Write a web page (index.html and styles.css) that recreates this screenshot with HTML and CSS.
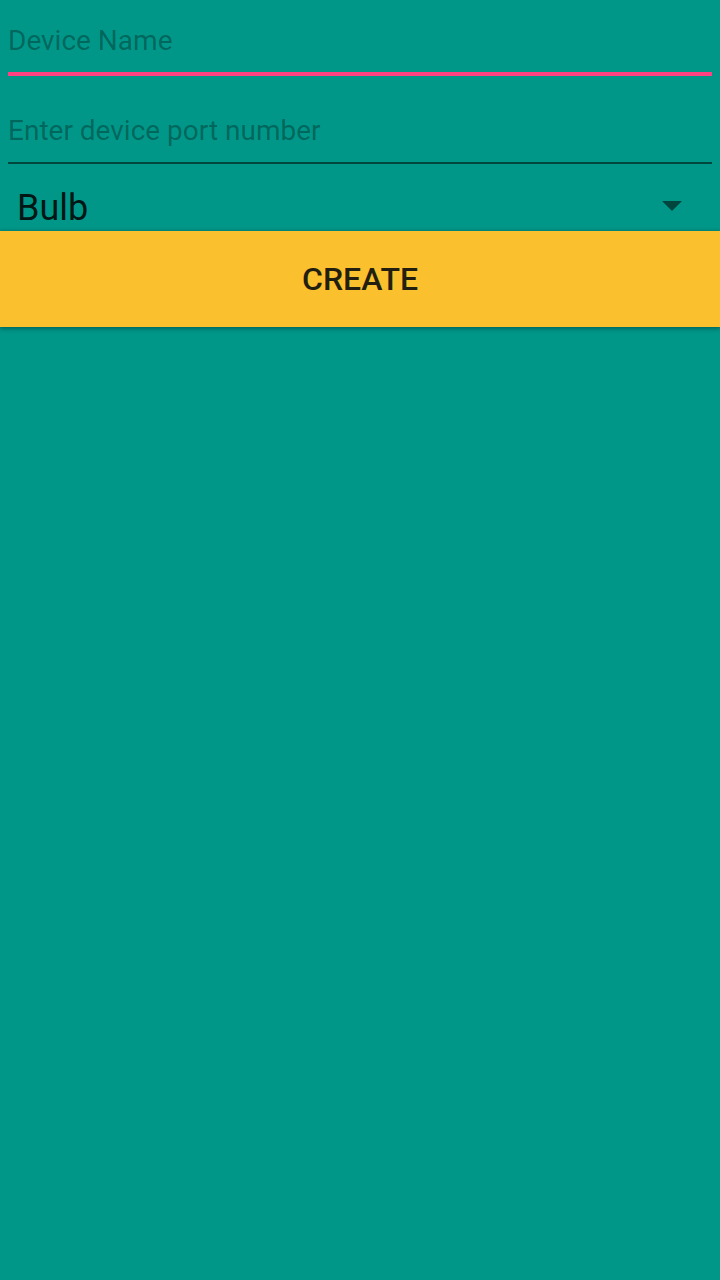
FILE: index.html
```html
<!DOCTYPE html>
<html>
<head>
<meta charset="utf-8">
<link rel="stylesheet" href="styles.css">
</head>
<body>
<div class="screen">
  <div class="field field-focused">
    <div class="hint">Device Name</div>
  </div>
  <div class="field field-port">
    <div class="hint">Enter device port number</div>
  </div>
  <div class="spinner">
    <span class="spinner-text">Bulb</span>
    <svg class="caret" width="20" height="10" viewBox="0 0 20 10"><polygon points="0,0 20,0 10,10" fill="#00463d"/></svg>
  </div>
  <div class="button">CREATE</div>
</div>
</body>
</html>
```
FILE: styles.css
```css
html, body {
  margin: 0;
  padding: 0;
  background: #009688;
}
.screen {
  width: 720px;
  height: 1280px;
  background: #009688;
  font-family: Roboto, "Noto Sans", sans-serif;
  display: flex;
  flex-direction: column;
}
.field {
  margin: 0 8px;
}
.hint {
  font-size: 28px;
  line-height: 32px;
  color: rgba(0, 0, 0, 0.32);
}
.field-focused {
  padding-top: 25px;
}
.field-focused .hint {
  padding-bottom: 15px;
  border-bottom: 4px solid #ff4081;
}
.field-port {
  padding-top: 39px;
}
.field-port .hint {
  padding-bottom: 15px;
  border-bottom: 2px solid #00473e;
}
.spinner {
  height: 67px;
  display: flex;
  align-items: flex-start;
  justify-content: space-between;
  padding-left: 17px;
  padding-right: 38px;
}
.spinner-text {
  font-size: 36px;
  line-height: 40px;
  margin-top: 24px;
  color: rgba(0, 0, 0, 0.87);
}
.caret {
  margin-top: 37px;
}
.button {
  height: 96px;
  background: #fbc02d;
  display: flex;
  align-items: center;
  justify-content: center;
  font-size: 32px;
  font-weight: 500;
  color: #231f10;
  box-shadow: 0 2px 4px rgba(0, 0, 0, 0.3), 0 -1px 3px rgba(0, 0, 0, 0.12);
}
```
